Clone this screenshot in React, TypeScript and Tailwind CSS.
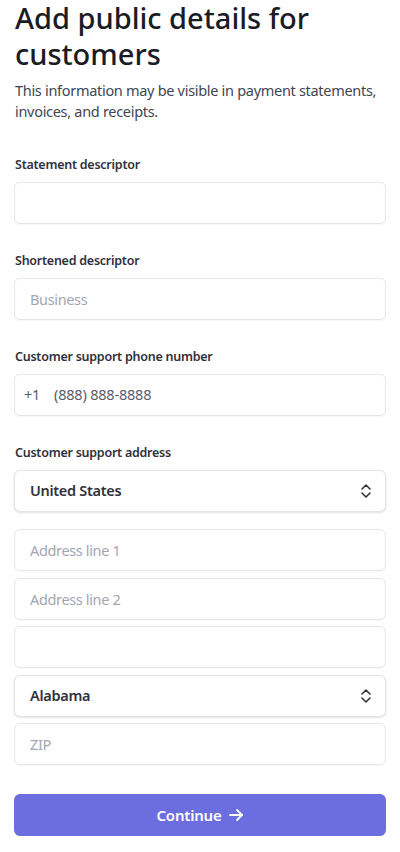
import React from 'react'

const font = { fontFamily: '"Noto Sans", "Open Sans", sans-serif' }

function Label({ children }: { children: React.ReactNode }) {
  return (
    <label className="block text-[12.5px] leading-5 font-semibold tracking-[-0.25px] text-[#30313d] mb-[7px] pl-px">
      {children}
    </label>
  )
}

function TextBox({ placeholder }: { placeholder?: string }) {
  return (
    <input
      placeholder={placeholder}
      className="block w-full h-[42px] rounded-md border border-[#e6e6eb] bg-white px-[15px] text-[14.5px] tracking-[-0.35px] text-[#30313d] placeholder:text-[#a3a6b2] shadow-[0_1px_1px_rgba(0,0,0,0.03)] outline-none"
    />
  )
}

function SelectBox({ value }: { value: string }) {
  return (
    <div className="flex items-center justify-between h-[42px] rounded-md border border-[#e3e3e8] bg-white pl-[15px] pr-[13px] shadow-[0_1px_2px_rgba(0,0,0,0.12)]">
      <span className="text-[14.5px] font-semibold tracking-[-0.3px] text-[#30313d]">{value}</span>
      <svg width="12" height="16" viewBox="0 0 12 16" fill="none" stroke="#30313d" strokeWidth="1.6" strokeLinecap="round" strokeLinejoin="round">
        <path d="M2 6 L6 2 L10 6" />
        <path d="M2 10 L6 14 L10 10" />
      </svg>
    </div>
  )
}

export default function App() {
  return (
    <div className="min-h-[852px] bg-white px-[14px] pb-6" style={font}>
      <h1 className="text-[29px] leading-[36px] font-medium text-[#1a1b25] pl-px">
        Add public details for customers
      </h1>
      <p className="mt-[8px] text-[14.5px] leading-[21px] tracking-[-0.3px] text-[#414552] pl-px">
        This information may be visible in payment statements, invoices, and receipts.
      </p>

      <div className="mt-[33px] flex flex-col gap-[27px]">
        <div>
          <Label>Statement descriptor</Label>
          <TextBox />
        </div>
        <div>
          <Label>Shortened descriptor</Label>
          <TextBox placeholder="Business" />
        </div>
        <div>
          <Label>Customer support phone number</Label>
          <div className="flex items-center h-[42px] rounded-md border border-[#e6e6eb] bg-white pl-[9px] text-[14.5px] tracking-[-0.2px] text-[#5a5d6b] shadow-[0_1px_1px_rgba(0,0,0,0.03)]">
            <span className="w-[30px]">+1</span>
            <span>(888) 888-8888</span>
          </div>
        </div>
        <div>
          <Label>Customer support address</Label>
          <SelectBox value="United States" />
          <div className="mt-[17px] flex flex-col gap-[6.5px]">
            <TextBox placeholder="Address line 1" />
            <TextBox placeholder="Address line 2" />
            <TextBox />
            <SelectBox value="Alabama" />
            <TextBox placeholder="ZIP" />
          </div>
        </div>
      </div>

      <button className="mt-[29px] flex w-full h-[42px] items-center justify-center gap-[6px] rounded-md bg-[#6c6ee0] text-[15px] font-semibold tracking-[-0.2px] text-white">
        Continue
        <svg width="16" height="16" viewBox="0 0 16 16" fill="none" stroke="white" strokeWidth="1.8" strokeLinecap="round" strokeLinejoin="round">
          <path d="M2 8 H14" />
          <path d="M9 3 L14 8 L9 13" />
        </svg>
      </button>
    </div>
  )
}
